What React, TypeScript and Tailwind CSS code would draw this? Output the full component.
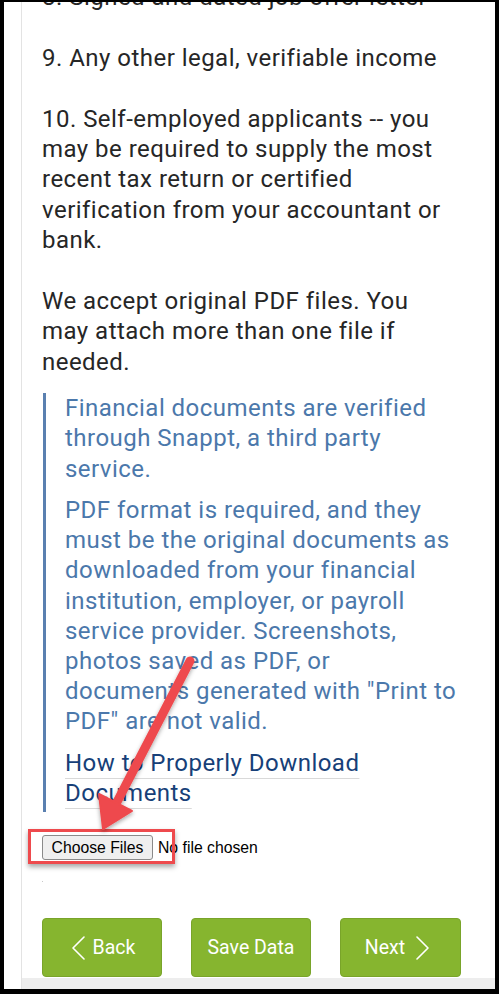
import React from "react";

const Chevron = ({ dir }: { dir: "left" | "right" }) => (
  <svg width="14" height="24" viewBox="0 0 14 24" fill="none">
    <polyline
      points={dir === "left" ? "13,1 2,12 13,23" : "1,1 12,12 1,23"}
      stroke="white"
      strokeWidth="1.6"
      strokeLinecap="round"
      strokeLinejoin="round"
    />
  </svg>
);

export default function App() {
  return (
    <div className="relative w-[499px] h-[994px] bg-black pt-[2px] pr-[4px] pb-[5px] pl-[4px] overflow-hidden">
      <div className="flex h-full w-full bg-white">
        <div className="w-[17px] shrink-0 bg-white" />
        <div className="w-[1px] shrink-0 bg-[#e3e3e3]" />
        <div className="flex flex-1 flex-col min-w-0">
          <main
            className="flex-1 overflow-hidden pl-[20px] text-[#262626]"
            style={{ fontFamily: "Roboto, 'Noto Sans', sans-serif" }}
          >
            <div className="text-[24px] leading-[30.4px] tracking-[0.47px] whitespace-nowrap">
              <p className="mt-[-20px] mb-[30.4px]">8. Signed and dated job offer letter</p>
              <p className="mb-[30.4px]">9. Any other legal, verifiable income</p>
              <p className="mb-[30.4px]">
                10. Self-employed applicants -- you
                <br />
                may be required to supply the most
                <br />
                recent tax return or certified
                <br />
                verification from your accountant or
                <br />
                bank.
              </p>
              <p>
                We accept original PDF files. You
                <br />
                may attach more than one file if
                <br />
                needed.
              </p>
            </div>

            <blockquote className="mt-[15.5px] ml-[1px] border-l-[3px] border-[#5a80b0] pl-[19px] pb-[4px] whitespace-nowrap tracking-[0.47px]">
              <p className="text-[24px] leading-[30.4px] text-[#4b78ab]">
                Financial documents are verified
                <br />
                through Snappt, a third party
                <br />
                service.
              </p>
              <p className="mt-[11px] text-[24px] leading-[30.2px] text-[#4b78ab]">
                PDF format is required, and they
                <br />
                must be the original documents as
                <br />
                downloaded from your financial
                <br />
                institution, employer, or payroll
                <br />
                service provider. Screenshots,
                <br />
                photos saved as PDF, or
                <br />
                documents generated with "Print to
                <br />
                PDF" are not valid.
              </p>
              <p className="mt-[11px] text-[24px] leading-[30.4px]">
                <a
                  href="#"
                  className="text-[#173f78] underline decoration-[#d9d9d9] decoration-1 underline-offset-[7px]"
                >
                  How to Properly Download
                  <br />
                  Documents
                </a>
              </p>
            </blockquote>

            <div
              className="mt-[23px] flex items-center h-[25px]"
              style={{ fontFamily: "'Liberation Sans', Arial, sans-serif" }}
            >
              <button className="h-[25px] w-[111px] rounded-[3px] border border-[#8a8a8a] bg-[#efefef] text-[15.75px] text-black">
                Choose Files
              </button>
              <span className="ml-[5px] text-[15.75px] text-black">No file chosen</span>
            </div>

            <div className="mt-[21px] h-[1px] w-[1px] bg-[#c8c8c8]" />

            <div className="mt-[36px] flex gap-[29px]">
              <button className="flex h-[59px] w-[120px] items-center justify-center gap-[8px] rounded-[4px] border border-[#79a42a] bg-[#86b52f] pl-[2px] text-[19.5px] text-white">
                <Chevron dir="left" />
                <span>Back</span>
              </button>
              <button className="flex h-[59px] w-[120px] items-center justify-center rounded-[4px] border border-[#79a42a] bg-[#86b52f] text-[19.5px] text-white">
                Save Data
              </button>
              <button className="flex h-[59px] w-[121px] items-center justify-center gap-[11px] rounded-[4px] border border-[#79a42a] bg-[#86b52f] pr-[6px] text-[19.5px] text-white">
                <span>Next</span>
                <Chevron dir="right" />
              </button>
            </div>
          </main>
          <div className="h-[11px] shrink-0 bg-[#ededed]" />
        </div>
      </div>

      {/* annotation: red box */}
      <div className="pointer-events-none absolute left-[28px] top-[829px] h-[35px] w-[147px] border-[3px] border-[#ee4a4d] shadow-[0_3px_5px_rgba(0,0,0,0.35)]" />

      {/* annotation: red arrow */}
      <svg
        className="pointer-events-none absolute left-0 top-0"
        width="499"
        height="994"
        viewBox="0 0 499 994"
      >
        <defs>
          <filter id="sh" x="-20%" y="-20%" width="140%" height="140%">
            <feDropShadow dx="0" dy="2" stdDeviation="2" floodColor="#000" floodOpacity="0.35" />
          </filter>
        </defs>
        <g filter="url(#sh)">
          <line x1="190" y1="661" x2="117" y2="802" stroke="#ee4a4d" strokeWidth="9" strokeLinecap="round" />
          <polygon points="132,811 99,794 103,829" fill="#ee4a4d" stroke="#ee4a4d" strokeWidth="2" strokeLinejoin="round" />
        </g>
      </svg>
    </div>
  );
}
